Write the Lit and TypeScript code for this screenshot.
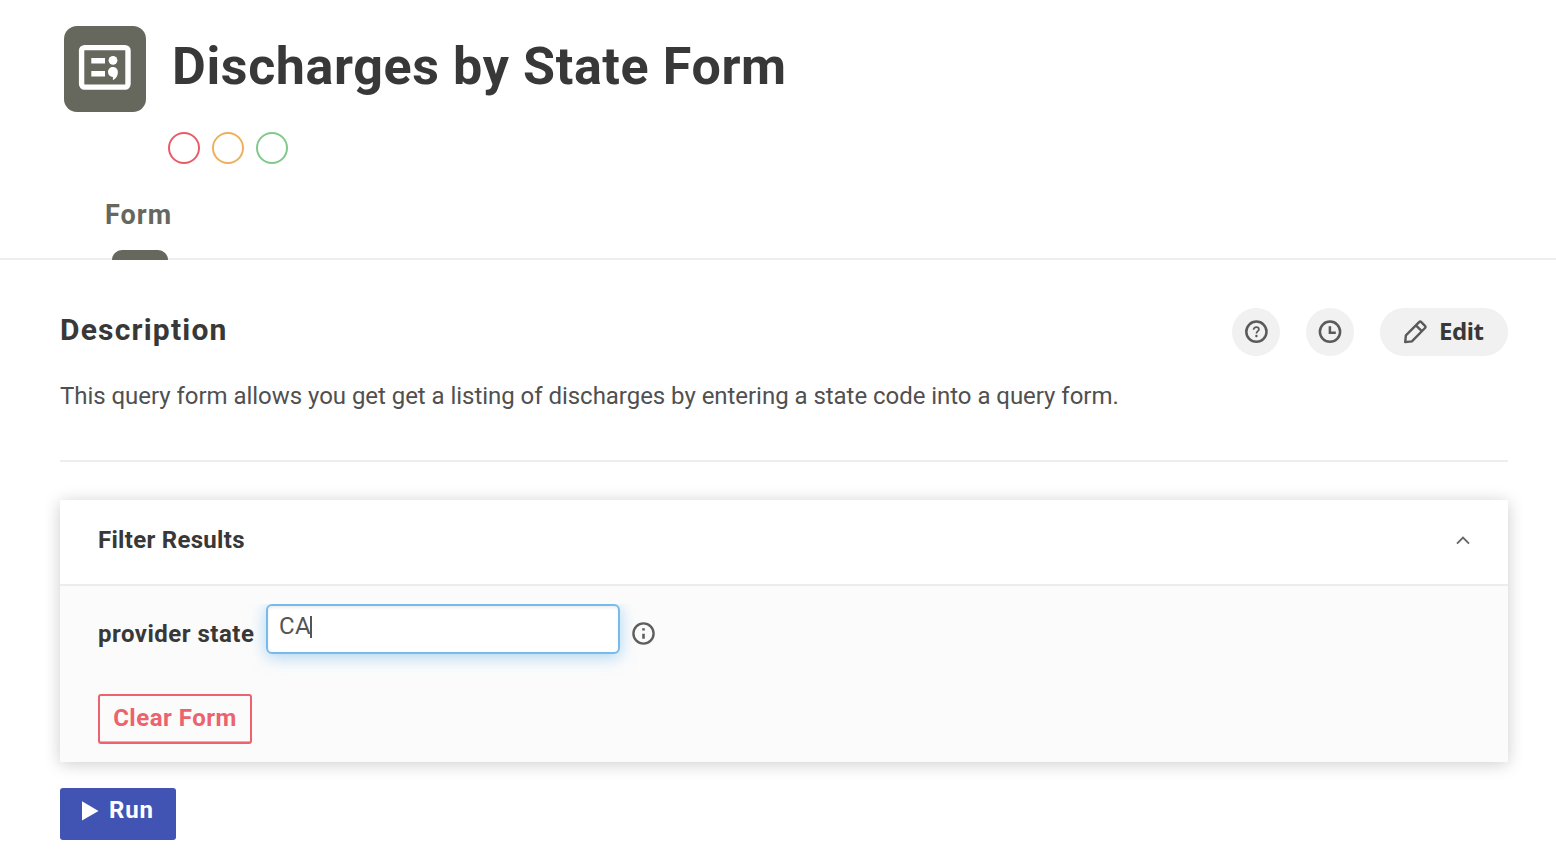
import { LitElement, html, css } from "lit";
import { customElement, state } from "lit/decorators.js";

@customElement("app-root")
export class AppRoot extends LitElement {
  @state() private providerState = "CA";

  static styles = css`
    :host {
      display: block;
      height: 868px;
      overflow: hidden;
      background: #fff;
      color: #383838;
      font-family: Roboto, "Liberation Sans", sans-serif;
      font-size: 24px;
      white-space: nowrap;
    }
    * { box-sizing: border-box; }
    svg { display: block; flex: none; }
    h1, h2, h3, p { margin: 0; }
    header {
      height: 260px;
      border-bottom: 2px solid #eee;
      display: flex;
      flex-direction: column;
    }
    .heading { display: flex; padding: 26px 0 0 64px; }
    .badge {
      width: 82px;
      height: 86px;
      border-radius: 13px;
      background: #66675d;
      margin-right: 26px;
    }
    .title {
      font-size: 52px;
      font-weight: 700;
      line-height: 60px;
      padding-top: 11px;
      letter-spacing: 0.62px;
    }
    .flags { display: flex; gap: 12px; padding: 20px 0 0 168px; }
    .flag { width: 32px; height: 32px; border: 2px solid; border-radius: 50%; }
    .red { color: #ea5c67; }
    .amber { color: #ecb05f; }
    .green { color: #81c98a; }
    .tab {
      margin: 35px 0 0 105px;
      width: 74px;
      height: 61px;
      display: flex;
      flex: none;
      flex-direction: column;
      justify-content: space-between;
      color: #66675d;
      font-size: 27px;
      font-weight: 700;
      line-height: 32px;
      letter-spacing: 1px;
    }
    .tab::after {
      content: "";
      width: 56px;
      height: 10px;
      margin-left: 7px;
      border-radius: 10px 10px 0 0;
      background: #66675d;
    }
    main { padding: 48px 48px 0 60px; }
    .row { display: flex; align-items: center; height: 48px; }
    .subtitle {
      font-size: 30px;
      font-weight: 700;
      line-height: 36px;
      letter-spacing: 1.2px;
      margin: -4px auto 0 0;
    }
    .pill {
      height: 48px;
      min-width: 48px;
      border-radius: 24px;
      background: #f1f1f1;
      margin-left: 26px;
      display: flex;
      align-items: center;
      justify-content: center;
    }
    .edit {
      width: 128px;
      justify-content: flex-start;
      padding-left: 23px;
      gap: 11px;
      font-family: "Noto Sans", sans-serif;
      font-weight: 700;
      font-size: 24px;
      line-height: 32px;
      letter-spacing: -0.4px;
    }
    .edit span { margin-top: -2px; }
    .text {
      line-height: 32px;
      margin-top: 24px;
      color: #505050;
      letter-spacing: -0.04px;
    }
    .rule { height: 2px; background: #ededed; margin: 48px 0 38px; }
    .card { height: 262px; background: #fbfbfb; box-shadow: 0 2px 16px rgba(0, 0, 0, 0.2); }
    .cardhead {
      height: 86px;
      padding: 0 38px 4px 38px;
      background: #fff;
      border-bottom: 2px solid #ececec;
      display: flex;
      align-items: center;
      justify-content: space-between;
    }
    .cardtitle { font-size: 24px; font-weight: 700; line-height: 32px; letter-spacing: 0.3px; }
    .fieldrow { display: flex; height: 50px; margin: 18px 0 40px 38px; }
    .label { width: 168px; font-weight: 700; line-height: 32px; padding-top: 14px; letter-spacing: 0.5px; }
    .field {
      width: 354px;
      height: 50px;
      border: 2px solid #77bbed;
      border-radius: 6px;
      background: #fff;
      box-shadow: 0 3px 16px rgba(119, 187, 237, 0.6), inset 0 2px 3px rgba(0, 0, 0, 0.07);
      clip-path: inset(0 -24px -24px -24px);
      padding: 4px 0 0 11px;
      display: flex;
      line-height: 32px;
      color: #555;
      letter-spacing: 0.4px;
      margin-right: 12px;
    }
    .caret { width: 2px; height: 22px; background: #555; margin: 6px 0 0 -1px; }
    .info { margin-top: 18px; }
    .clear {
      width: 154px;
      height: 50px;
      margin-left: 38px;
      border: 2px solid #ec636d;
      border-radius: 3px;
      box-shadow: inset 0 -1px 0 #f4a6ab;
      color: #ec636d;
      font-weight: 700;
      line-height: 32px;
      letter-spacing: 0.5px;
      text-align: center;
      padding-top: 6px;
    }
    .run {
      width: 116px;
      height: 52px;
      margin-top: 26px;
      border-radius: 3px;
      background: #4153b3;
      color: #fff;
      font-weight: 700;
      line-height: 32px;
      letter-spacing: 0.8px;
      display: flex;
      gap: 10px;
      padding: 6px 0 0 22px;
    }
    .play { margin-top: 7px; }
  `;

  render() {
    return html`
      <header>
        <div class="heading">
          <svg class="badge" viewBox="0 0 82 86" fill="#fff">
            <rect x="17.6" y="21.600" width="46.400" height="39.500" rx="3" fill="none" stroke="#fff" stroke-width="5.400" />
            <path d="M27.300 32h13.700v5.400H27.300zM27.300 45h13.700v5.400H27.300z" />
            <circle cx="49" cy="34.300" r="4.400" />
            <path d="M49 41.100c-2.900 0-5 2.100-5 5 0 2.700 2 4.800 4.900 4.900v3.200c3.200-1.500 5-4.600 5-8 0-3-2-5.100-4.900-5.100z" />
          </svg>
          <h1 class="title">Discharges by State Form</h1>
        </div>
        <div class="flags">
          <div class="flag red"></div>
          <div class="flag amber"></div>
          <div class="flag green"></div>
        </div>
        <div class="tab">Form</div>
      </header>
      <main>
        <div class="row">
          <h2 class="subtitle">Description</h2>
          <div class="pill">
            <svg width="24" height="24" fill="none" stroke="#5a5a5a" stroke-width="2.500">
              <circle cx="12.400" cy="11.700" r="10.100" />
              <path d="M9.600 9.700c0-1.700 1.200-2.600 2.700-2.600s2.600.9 2.600 2.300c0 1.800-2.500 1.900-2.500 4.200" stroke-width="1.700" />
              <circle cx="12.400" cy="16" r="1.200" fill="#555" stroke="none" />
            </svg>
          </div>
          <div class="pill">
            <svg width="24" height="24" fill="none" stroke="#5a5a5a" stroke-width="2.500">
              <circle cx="12" cy="11.700" r="10.100" />
              <path d="M11.900 6.300v6.500h5.900" />
            </svg>
          </div>
          <div class="pill edit">
            <svg width="25" height="26" fill="none" stroke="#5a5a5a" stroke-width="2.400" stroke-linejoin="round">
              <path d="M2.200 23.100l.7-6.700L16.100 3.100c.7-.7 1.500-.7 2.200 0l3.700 3.700c.7.700.7 1.500 0 2.200L8.900 22.400zM12.900 6.300l5.900 5.900" />
            </svg>
            <span>Edit</span>
          </div>
        </div>
        <p class="text">This query form allows you get get a listing of discharges by entering a state code into a query form.</p>
        <div class="rule"></div>
        <section class="card">
          <div class="cardhead">
            <h3 class="cardtitle">Filter Results</h3>
            <svg width="14" height="10" fill="none" stroke="#666" stroke-width="1.900">
              <path d="M1 8.700l6-6 6 6" />
            </svg>
          </div>
          <div class="fieldrow">
            <div class="label">provider state</div>
            <div class="field"><span>${this.providerState}</span><span class="caret"></span></div>
            <svg class="info" width="24" height="24" fill="none" stroke="#5f5f5f" stroke-width="2.400">
              <circle cx="11.500" cy="11.500" r="10.100" />
              <path d="M11.500 6.300v2.200M11.500 11.800v5" stroke-width="2.600" />
            </svg>
          </div>
          <div class="clear">Clear Form</div>
        </section>
        <div class="run">
          <svg class="play" width="17" height="20" fill="#fff"><path d="M0 .3l16.500 9.600L0 19.500z" /></svg>
          <span>Run</span>
        </div>
      </main>
    `;
  }
}
